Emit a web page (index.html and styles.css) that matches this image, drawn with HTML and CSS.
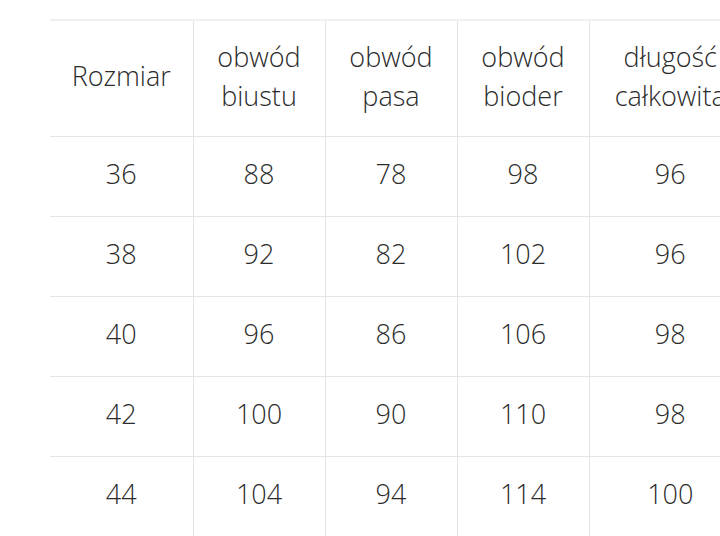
FILE: index.html
```html
<!DOCTYPE html>
<html lang="pl">
<head>
<meta charset="utf-8">
<link rel="stylesheet" href="styles.css">
</head>
<body>
<div class="wrap">
<table class="sizes">
  <colgroup>
    <col class="c1"><col class="c2"><col class="c2"><col class="c2"><col class="c5">
  </colgroup>
  <thead>
    <tr><th>Rozmiar</th><th>obwód<br>biustu</th><th>obwód<br>pasa</th><th>obwód<br>bioder</th><th>długość<br>całkowita</th></tr>
  </thead>
  <tbody>
    <tr><td>36</td><td>88</td><td>78</td><td>98</td><td>96</td></tr>
    <tr><td>38</td><td>92</td><td>82</td><td>102</td><td>96</td></tr>
    <tr><td>40</td><td>96</td><td>86</td><td>106</td><td>98</td></tr>
    <tr><td>42</td><td>100</td><td>90</td><td>110</td><td>98</td></tr>
    <tr><td>44</td><td>104</td><td>94</td><td>114</td><td>100</td></tr>
  </tbody>
</table>
</div>
</body>
</html>
```
FILE: styles.css
```css
html, body {
  margin: 0;
  padding: 0;
  background: #fff;
  overflow: hidden;
}
.wrap {
  padding: 19px 0 0 50px;
  width: 760px;
}
.sizes {
  border-collapse: collapse;
  table-layout: fixed;
  width: 701px;
  font-family: "Open Sans", sans-serif;
  font-weight: 300;
  font-size: 27px;
  color: #2b2b2b;
  border-top: 2px solid #f0f0f0;
}
.c1 { width: 143px; }
.c2 { width: 132px; }
.c5 { width: 162px; }
.sizes th, .sizes td {
  text-align: center;
  vertical-align: middle;
  font-weight: 300;
  border-left: 1px solid #e4e4e4;
  border-bottom: 1px solid #e4e4e4;
}
.sizes th:first-child, .sizes td:first-child {
  border-left: none;
}
.sizes th {
  height: 116px;
  line-height: 39px;
  padding: 0 0 5px;
  box-sizing: border-box;
}
.sizes td {
  height: 80px;
  line-height: 36px;
  padding: 0 0 4px;
  box-sizing: border-box;
}
```
